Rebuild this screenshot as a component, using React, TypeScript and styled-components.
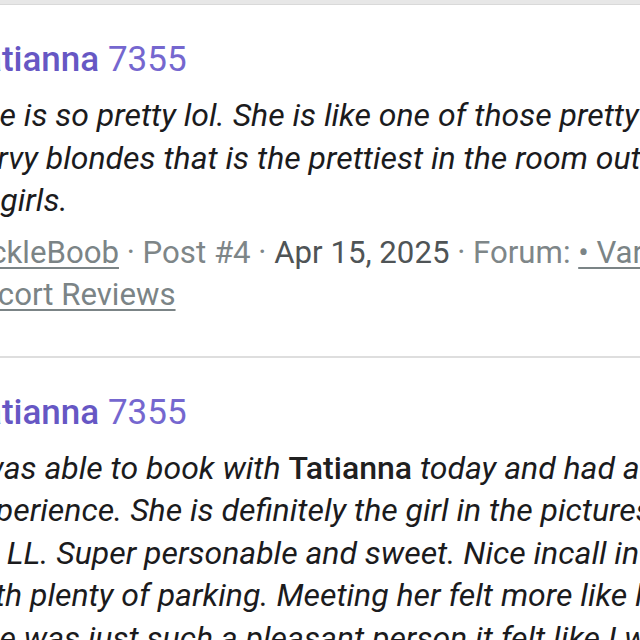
import React from "react";
import styled, { createGlobalStyle } from "styled-components";

const GlobalStyle = createGlobalStyle`
  html, body { margin: 0; padding: 0; background: #ffffff; }
  body { font-family: Roboto, "Noto Sans", Arial, sans-serif; overflow: hidden; }
`;

const Page = styled.div`
  width: 640px;
  height: 640px;
  overflow: hidden;
  background: #ffffff;
  display: flex;
  flex-direction: column;
`;

const TopBar = styled.div`
  height: 4px;
  flex: none;
  background: #e7e7e7;
  border-bottom: 1px solid #d9d9d9;
`;

const Post = styled.article`
  flex: none;
  padding: 32px 0 39px;
  border-bottom: 2px solid #dedede;
`;

const Column = styled.div<{ $shift: number }>`
  margin-left: ${(p) => p.$shift}px;
  display: flex;
  flex-direction: column;
`;

const Title = styled.h2`
  margin: 0;
  font-size: 35px;
  line-height: 46px;
  color: #6b5cc9;
  white-space: nowrap;
  font-weight: 400;
`;

const TitleName = styled.span`
  font-weight: 500;
  color: #6657c4;
`;

const TitleNum = styled.span`
  font-weight: 400;
  color: #7567cf;
`;

const Body = styled.div`
  margin-top: 11px;
  font-size: 32px;
  line-height: 42.5px;
  font-style: italic;
  color: #1b1b1d;
`;

const Line = styled.div`
  white-space: nowrap;
`;

const Strong = styled.b`
  font-style: normal;
  font-weight: 500;
  color: #202020;
`;

const Meta = styled.div`
  margin-top: 10px;
  font-size: 31.2px;
  line-height: 42.5px;
  color: #7e8688;
`;

const MetaLink = styled.a`
  color: #7b8486;
  text-decoration: underline;
  text-decoration-thickness: 2px;
  text-underline-offset: 4px;
`;

const MetaDate = styled.span`
  color: #4f5456;
`;

export default function App() {
  return (
    <Page>
      <GlobalStyle />
      <TopBar />
      <Post>
        <Column $shift={-36}>
          <Title>
            <TitleName>Tatianna</TitleName> <TitleNum>7355</TitleNum>
          </Title>
          <Body>
            <Line>She is so pretty lol. She is like one of those pretty</Line>
            <Line>curvy blondes that is the prettiest in the room out</Line>
            <Line>of girls.</Line>
          </Body>
          <Meta>
            <Line>
              <MetaLink>TickleBoob</MetaLink> · Post #4 · <MetaDate>Apr 15, 2025</MetaDate> · Forum:{" "}
              <MetaLink>• Various</MetaLink>
            </Line>
            <Line>
              <MetaLink>Escort Reviews</MetaLink>
            </Line>
          </Meta>
        </Column>
      </Post>
      <Post>
        <Column $shift={-36}>
          <Title>
            <TitleName>Tatianna</TitleName> <TitleNum>7355</TitleNum>
          </Title>
          <Body>
            <Line>
              I was able to book with <Strong>Tatianna</Strong> today and had a great
            </Line>
            <Line>experience. She is definitely the girl in the pictures</Line>
            <Line>no LL. Super personable and sweet. Nice incall in</Line>
            <Line>with plenty of parking. Meeting her felt more like hanging</Line>
            <Line>She was just such a pleasant person it felt like I was</Line>
          </Body>
        </Column>
      </Post>
    </Page>
  );
}
